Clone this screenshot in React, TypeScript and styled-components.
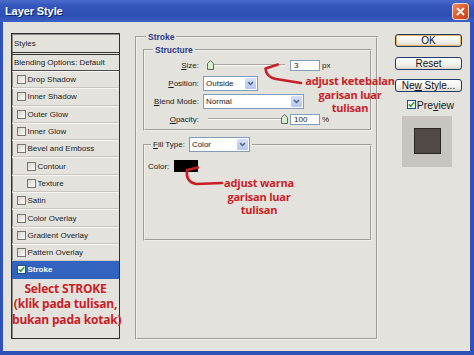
import React from 'react';
import styled, { createGlobalStyle } from 'styled-components';

const Global = createGlobalStyle`
  html, body { margin: 0; padding: 0; }
  body {
    width: 474px; height: 355px; overflow: hidden;
    background: #2f52b8;
    font-family: "Liberation Sans", Arial, sans-serif;
  }
`;

const Window = styled.div`
  position: relative;
  width: 474px;
  height: 355px;
  display: flex;
  flex-direction: column;
`;

const TitleBar = styled.div`
  height: 22px;
  flex: none;
  display: flex;
  align-items: center;
  justify-content: space-between;
  padding: 0 5px 0 5px;
  background: linear-gradient(180deg, #4a6bcc 0%, #3557bd 25%, #2c4eb4 70%, #3d60c6 100%);
`;

const Title = styled.div`
  color: #fff;
  font-weight: bold;
  font-size: 11px;
  letter-spacing: -0.1px;
  text-shadow: 1px 1px 0 #0f2466;
`;

const CloseBtn = styled.div`
  width: 15px;
  height: 15px;
  border: 1px solid #f3d4c6;
  border-radius: 3px;
  background: linear-gradient(135deg, #ee8a62 0%, #dd5a2e 50%, #c4401c 100%);
  display: flex;
  align-items: center;
  justify-content: center;
`;

const Body = styled.div`
  flex: 1;
  display: flex;
  align-items: flex-start;
  background: #e4e2dd;
  border: solid #2f52b8;
  border-width: 0 4px 4px 3px;
  padding: 11px 0 0 8px;
  color: #1b1b1b;
`;

/* ---------- styles list ---------- */
const StylesList = styled.div`
  width: 109px;
  height: 306px;
  box-sizing: border-box;
  border: 1px solid #2e2e2e;
  box-shadow: inset 1px 1px 0 #8f8d88;
  display: flex;
  flex-direction: column;
  font-size: 8px;
  flex: none;
`;

const ListHeader = styled.div`
  height: 18px;
  display: flex;
  align-items: center;
  padding-left: 2px;
  border-bottom: 3px double #333;
`;

const ListBlend = styled.div`
  height: 15px;
  display: flex;
  align-items: center;
  padding-left: 2px;
  border-bottom: 1px solid #4a4a4a;
`;

const ListRow = styled.div<{ $indent?: boolean; $selected?: boolean }>`
  height: 17.3px;
  box-sizing: border-box;
  display: flex;
  align-items: center;
  gap: 1.5px;
  padding-left: ${p => (p.$indent ? 15 : 5)}px;
  border-top: 1px solid ${p => (p.$selected ? '#3163c0' : '#f7f6f3')};
  border-bottom: 1px solid ${p => (p.$selected ? '#3163c0' : '#c9c6bf')};
  background: ${p => (p.$selected ? '#3264bf' : 'transparent')};
  color: ${p => (p.$selected ? '#fff' : '#1b1b1b')};
  font-weight: ${p => (p.$selected ? 'bold' : 'normal')};
`;

const Box = styled.span<{ $checked?: boolean }>`
  width: 9px;
  height: 9px;
  box-sizing: border-box;
  flex: none;
  border: 1px solid ${p => (p.$checked ? '#1c5180' : '#77756f')};
  background: ${p => (p.$checked ? '#fff' : 'linear-gradient(135deg, #d6d4cd, #fbfbf9)')};
  display: flex;
  align-items: center;
  justify-content: center;
`;

const Note = styled.div<{ $size: number; $lh: number }>`
  color: #c81e27;
  font-family: "Open Sans", "Noto Sans", sans-serif;
  font-weight: bold;
  font-size: ${p => p.$size}px;
  line-height: ${p => p.$lh}px;
  text-align: center;
  letter-spacing: -0.2px;
  white-space: nowrap;
`;

const ListNote = styled(Note)`
  margin-top: 2px;
`;

/* ---------- content groups ---------- */
const Group = styled.fieldset<{ $pad: string }>`
  margin: 0;
  min-width: 0;
  box-sizing: border-box;
  border: 2px groove #f2f0eb;
  padding: ${p => p.$pad};
`;

const OuterGroup = styled(Group)`
  width: 243px;
  height: 308px;
  margin: -1px 0 0 15px;
  flex: none;
`;

const Legend = styled.legend<{ $ml: number }>`
  padding: 0 2px;
  margin-left: ${p => p.$ml}px;
  font-size: 8.5px;
  line-height: 10px;
  font-weight: bold;
  color: #2c3a8e;
`;

const FillLegend = styled.legend`
  padding: 0 2px;
  margin-left: 6px;
  display: flex;
  align-items: center;
  gap: 4px;
  font-size: 8px;
  height: 15px;
`;

const FillGroup = styled(Group)`
  margin-top: 6px;
`;

const FieldGrid = styled.div`
  display: grid;
  grid-template-columns: 52px 1fr;
  grid-template-rows: 18px 18px 19px 16px;
  column-gap: 4px;
  align-items: center;
  font-size: 8px;
`;

const Label = styled.div`
  text-align: right;
  white-space: nowrap;
`;

const Controls = styled.div`
  display: flex;
  align-items: center;
`;

const SliderWrap = styled.div`
  position: relative;
  width: 84px;
  height: 12px;
  flex: none;
`;

const Track = styled.div`
  position: absolute;
  left: 5px;
  right: 2px;
  top: 5px;
  height: 0;
  border-top: 1px solid #a8a59e;
  border-bottom: 1px solid #fbfaf7;
`;

const Thumb = styled.svg`
  position: absolute;
  top: 1px;
  width: 7px;
  height: 10px;
`;

const NumInput = styled.div`
  width: 30px;
  height: 11px;
  box-sizing: border-box;
  margin-left: 3px;
  background: #fff;
  border: 1px solid #7f9db9;
  font-size: 8px;
  line-height: 9px;
  padding-left: 3px;
`;

const Unit = styled.span`
  margin-left: 2px;
  font-size: 8px;
`;

const Select = styled.div<{ $w: number }>`
  width: ${p => p.$w}px;
  height: 15px;
  box-sizing: border-box;
  background: #fff;
  border: 1px solid #7f9db9;
  display: flex;
  align-items: stretch;
  font-size: 8px;
`;

const SelectText = styled.div`
  flex: 1;
  display: flex;
  align-items: center;
  padding-left: 2px;
`;

const SelectArrow = styled.div`
  width: 11px;
  margin: 1px;
  border-radius: 1px;
  background: linear-gradient(180deg, #d4e0fb, #b3c6ee);
  display: flex;
  align-items: center;
  justify-content: center;
`;

const ColorRow = styled.div`
  display: flex;
  align-items: center;
  gap: 5px;
  height: 12px;
  margin-top: 8px;
  padding-left: 3px;
  font-size: 8px;
`;

const Swatch = styled.div`
  width: 24px;
  height: 12px;
  background: #000;
`;

/* ---------- side column ---------- */
const Side = styled.div`
  width: 67px;
  margin: 1px 0 0 17px;
  display: flex;
  flex-direction: column;
  align-items: center;
  flex: none;
`;

const Button = styled.div<{ $default?: boolean }>`
  width: 67px;
  height: 13px;
  box-sizing: border-box;
  border: 1px solid #1d3c6c;
  border-radius: 3px;
  background: linear-gradient(180deg, #ffffff 0%, #f2f1ec 60%, #dcd7cc 100%);
  box-shadow: ${p => (p.$default ? 'inset 0 0 0 1px #e9b35a' : 'none')};
  display: flex;
  align-items: center;
  justify-content: center;
  font-size: 10px;
  color: #111;
  margin-bottom: 9.6px;
  white-space: pre;
`;

const PreviewRow = styled.div`
  display: flex;
  align-items: center;
  gap: 1px;
  height: 10px;
  margin-top: -2px;
  font-size: 10.5px;
  margin-left: 4px;
`;

const PreviewBox = styled.div`
  width: 50px;
  height: 51px;
  margin-top: 6px;
  margin-left: -3px;
  background: #c8c4bf;
  display: flex;
  align-items: center;
  justify-content: center;
`;

const PreviewInner = styled.div`
  width: 27px;
  height: 26px;
  box-sizing: border-box;
  border: 1px solid #2b2623;
  background: #514945;
`;

/* ---------- overlays ---------- */
const Annotation = styled(Note)`
  position: absolute;
`;

const ArrowLayer = styled.svg`
  position: absolute;
  left: 0;
  top: 0;
  pointer-events: none;
`;

const Check = () => (
  <svg width="7" height="7" viewBox="0 0 7 7">
    <polyline points="0.8,3.4 2.7,5.4 6.2,1.2" fill="none" stroke="#22a322" strokeWidth="1.6" />
  </svg>
);

const Chevron = () => (
  <svg width="7" height="5" viewBox="0 0 7 5">
    <polyline points="1,1 3.5,3.5 6,1" fill="none" stroke="#4d6185" strokeWidth="1.5" />
  </svg>
);

const Slider = ({ value }: { value: number }) => (
  <SliderWrap>
    <Track />
    <Thumb viewBox="0 0 7 10" style={{ left: `${2 + value * 76}px` }}>
      <path d="M0.5,9.5 L0.5,3.5 L3.5,0.5 L6.5,3.5 L6.5,9.5 Z" fill="#d8edcd" stroke="#5c6b57" strokeWidth="1" />
    </Thumb>
  </SliderWrap>
);

const rows: { label: string; indent?: boolean; selected?: boolean }[] = [
  { label: 'Drop Shadow' },
  { label: 'Inner Shadow' },
  { label: 'Outer Glow' },
  { label: 'Inner Glow' },
  { label: 'Bevel and Emboss' },
  { label: 'Contour', indent: true },
  { label: 'Texture', indent: true },
  { label: 'Satin' },
  { label: 'Color Overlay' },
  { label: 'Gradient Overlay' },
  { label: 'Pattern Overlay' },
  { label: 'Stroke', selected: true },
];

export default function App() {
  return (
    <>
      <Global />
      <Window>
        <TitleBar>
          <Title>Layer Style</Title>
          <CloseBtn>
            <svg width="9" height="9" viewBox="0 0 9 9">
              <path d="M1.5,1.5 L7.5,7.5 M7.5,1.5 L1.5,7.5" stroke="#fff" strokeWidth="1.8" strokeLinecap="round" />
            </svg>
          </CloseBtn>
        </TitleBar>
        <Body>
          <StylesList>
            <ListHeader>Styles</ListHeader>
            <ListBlend>Blending Options: Default</ListBlend>
            {rows.map(r => (
              <ListRow key={r.label} $indent={r.indent} $selected={r.selected}>
                <Box $checked={r.selected}>{r.selected && <Check />}</Box>
                {r.label}
              </ListRow>
            ))}
            <ListNote $size={12} $lh={15.5}>
              Select STROKE
              <br />
              (klik pada tulisan,
              <br />
              bukan pada kotak)
            </ListNote>
          </StylesList>

          <OuterGroup $pad="3px 4px 0 6px">
            <Legend $ml={3}>Stroke</Legend>
            <Group $pad="1px 0 2px 2px">
              <Legend $ml={6}>Structure</Legend>
              <FieldGrid>
                <Label><u>S</u>ize:</Label>
                <Controls>
                  <Slider value={0.03} />
                  <NumInput>3</NumInput>
                  <Unit>px</Unit>
                </Controls>
                <Label><u>P</u>osition:</Label>
                <Controls>
                  <Select $w={55}>
                    <SelectText>Outside</SelectText>
                    <SelectArrow><Chevron /></SelectArrow>
                  </Select>
                </Controls>
                <Label><u>B</u>lend Mode:</Label>
                <Controls>
                  <Select $w={101}>
                    <SelectText>Normal</SelectText>
                    <SelectArrow><Chevron /></SelectArrow>
                  </Select>
                </Controls>
                <Label><u>O</u>pacity:</Label>
                <Controls>
                  <Slider value={1} />
                  <NumInput>100</NumInput>
                  <Unit>%</Unit>
                </Controls>
              </FieldGrid>
            </Group>
            <FillGroup $pad="0 0 67px 0">
              <FillLegend>
                <span><u>F</u>ill Type:</span>
                <Select $w={61}>
                  <SelectText>Color</SelectText>
                  <SelectArrow><Chevron /></SelectArrow>
                </Select>
              </FillLegend>
              <ColorRow>
                <span>Color:</span>
                <Swatch />
              </ColorRow>
            </FillGroup>
          </OuterGroup>

          <Side>
            <Button $default>OK</Button>
            <Button>Reset</Button>
            <Button><span>Ne<u>w</u> Style...</span></Button>
            <PreviewRow>
              <Box $checked><Check /></Box>
              <span>Pre<u>v</u>iew</span>
            </PreviewRow>
            <PreviewBox>
              <PreviewInner />
            </PreviewBox>
          </Side>
        </Body>

        <Annotation $size={11} $lh={13.5} style={{ left: 295, top: 74, width: 110 }}>
          adjust ketebalan
          <br />
          garisan luar
          <br />
          tulisan
        </Annotation>
        <Annotation $size={11} $lh={13.5} style={{ left: 209, top: 176, width: 100 }}>
          adjust warna
          <br />
          garisan luar
          <br />
          tulisan
        </Annotation>
        <ArrowLayer width="474" height="355" viewBox="0 0 474 355">
          <path d="M278,64.5 L265.5,68.5 Q266,77 276,79 L301,83" fill="none" stroke="#c81e27" strokeWidth="2.6" strokeLinecap="round" strokeLinejoin="round" />
          <path d="M198,167.5 L187,170 Q185.5,182 196,184 L222,183" fill="none" stroke="#c81e27" strokeWidth="2.6" strokeLinecap="round" strokeLinejoin="round" />
        </ArrowLayer>
      </Window>
    </>
  );
}
